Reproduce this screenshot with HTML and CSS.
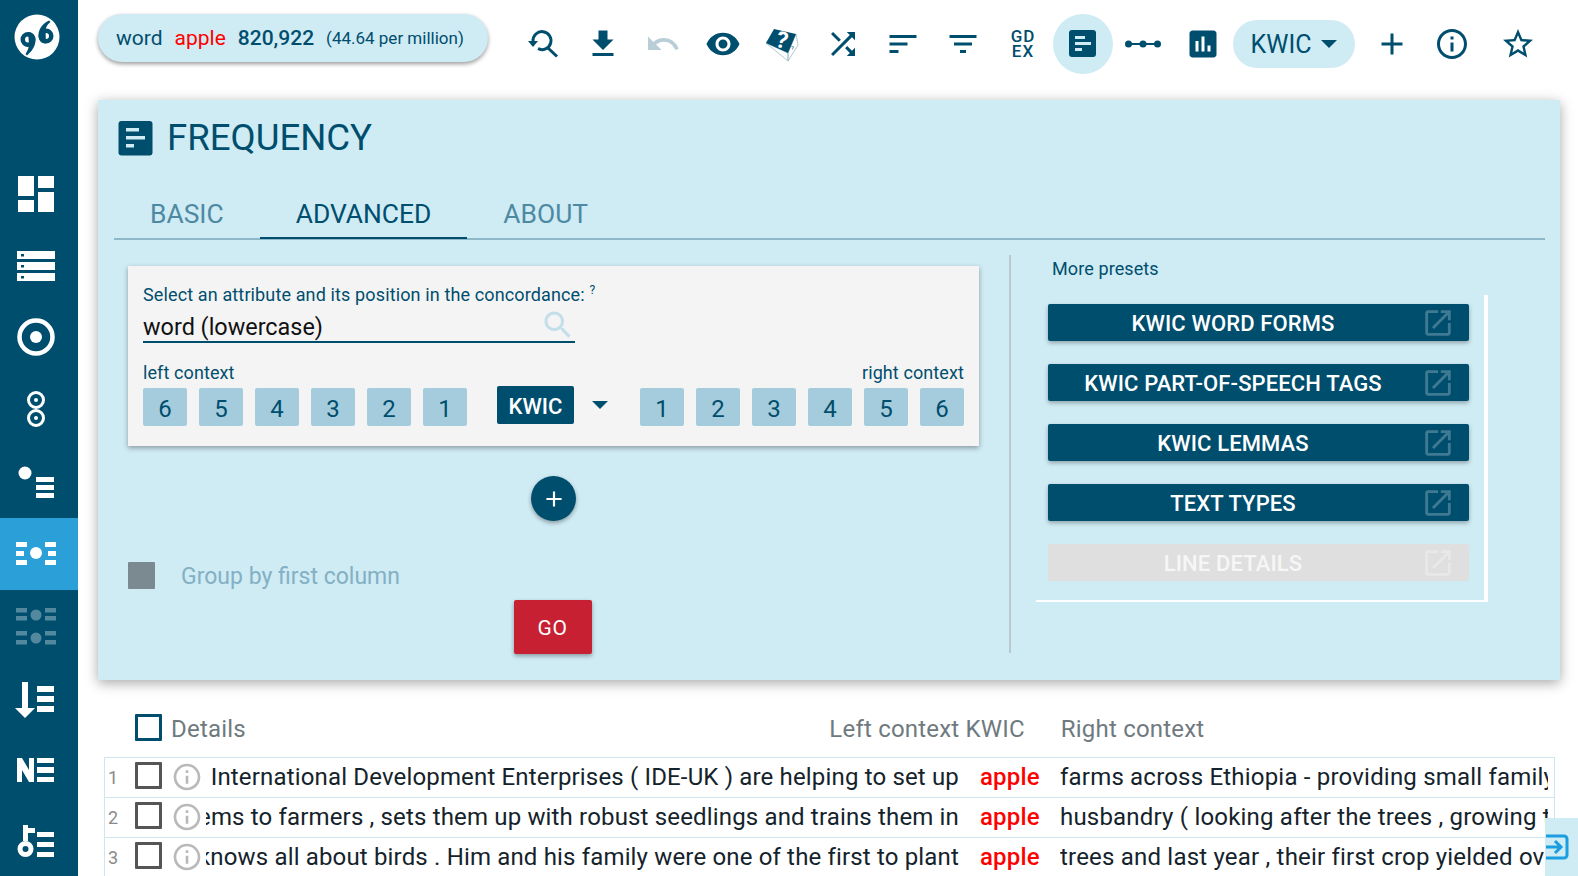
FILE: index.html
```html
<!DOCTYPE html>
<html lang="en">
<head>
<meta charset="utf-8">
<title>Frequency</title>
<link rel="stylesheet" href="styles.css">
</head>
<body>
<nav class="sidebar">
  <div class="logo">
    <svg width="46" height="46" viewBox="0 0 46 46"><circle cx="23" cy="23" r="22.500" fill="#fff"/><g fill="#fff" stroke="#004e6e" stroke-width="4.500"><circle cx="14" cy="25.500" r="5.250"/><circle cx="32" cy="22" r="5.250"/></g><g fill="#004e6e"><path d="M14 18c5 0 7.500 4 7.500 8 0 7-4.500 12-8.500 15.500L11.500 40c2.500-4 3.500-7 3.500-10z"/><path d="M32 29.500c-5 0-7.500-3.500-7.500-8.500 0-7 5.500-12 10.500-14.500L36.500 8c-3.500 3-4.500 5-5 8z"/></g></svg>
  </div>
  <a class="side-item"><svg width="48" height="48" viewBox="0 0 24 24" fill="#fff"><path d="M3 13h8V3H3v10zm0 8h8v-6H3v6zm10 0h8V11h-8v10zm0-18v6h8V3h-8z"/></svg></a>
  <a class="side-item"><svg width="48" height="48" viewBox="0 0 48 48" fill="#fff"><path fill-rule="evenodd" d="M5 9h38v8H5zm4 3v2.500h3V12zM5 20h38v8H5zm4 3v2.500h3V23zM5 31h38v8H5zm4 3v2.500h3V34z"/></svg></a>
  <a class="side-item"><svg width="48" height="48" viewBox="0 0 48 48"><circle cx="24" cy="23" r="16.500" fill="none" stroke="#fff" stroke-width="4.500"/><circle cx="24" cy="23" r="6" fill="#fff"/></svg></a>
  <a class="side-item"><svg width="48" height="48" viewBox="0 0 48 48" fill="none" stroke="#fff" stroke-width="3"><circle cx="24" cy="14" r="7.500"/><circle cx="24" cy="32" r="7.500"/><circle cx="24" cy="14" r="2" fill="#fff" stroke="none"/><circle cx="24" cy="32" r="2" fill="#fff" stroke="none"/></svg></a>
  <a class="side-item"><svg width="48" height="48" viewBox="0 0 48 48" fill="#fff"><circle cx="13" cy="15" r="6.500"/><path d="M24 19h18v5H24zM24 27h18v5H24zM24 35h18v5H24z"/></svg></a>
  <a class="side-item active"><svg width="48" height="48" viewBox="0 0 48 48" fill="#fff"><circle cx="24" cy="23" r="6"/><path d="M4 12h11v5H4zM4 21h8v5H4zM4 30h11v5H4zM33 12h11v5H33zM36 21h8v5h-8zM33 30h11v5H33z"/></svg></a>
  <a class="side-item faded"><svg width="48" height="48" viewBox="0 0 48 48" fill="#fff"><circle cx="24" cy="13" r="5.500"/><circle cx="24" cy="36" r="5.500"/><path d="M4 6h11v4.500H4zM4 14h11v4.500H4zM33 6h11v4.500H33zM33 14h11v4.500H33zM4 29h11v4.500H4zM4 38h11v4.500H4zM33 29h11v4.500H33zM33 38h11v4.500H33z"/></svg></a>
  <a class="side-item"><svg width="48" height="48" viewBox="0 0 48 48" fill="#fff"><path d="M10 8h6v26h7L13 44 3 34h7zM25 12h17v6H25zM25 22h17v6H25zM25 32h17v6H25z"/></svg></a>
  <a class="side-item"><svg width="48" height="48" viewBox="0 0 48 48" fill="#fff"><path d="M5 12h5l7 12V12h5v24h-5L10 24v12H5zM25 12h17v5H25zM25 21h17v6H25zM25 31h17v5H25z"/></svg></a>
  <a class="side-item"><svg width="48" height="48" viewBox="0 0 48 48"><path fill="#fff" d="M11 7h5v3h7v5h-7v8h-5zM25 14h17v5H25zM25 24h17v5H25zM25 34h17v5H25z"/><circle cx="13.500" cy="31" r="5.500" fill="none" stroke="#fff" stroke-width="5"/></svg></a>
</nav>

<div class="main">
  <header class="toolbar">
    <div class="summary">
      <span class="s-word">word</span><span class="s-apple">apple</span><span class="s-count">820,922</span><span class="s-ipm">(44.64 per million)</span>
    </div>
    <div class="tools">
      <span class="tool"><svg width="36" height="36" viewBox="0 0 36 36" fill="none" stroke="#004e6e" stroke-width="3"><path d="M8 15A9 9 0 1 1 13 22.700"/><path d="M23 22l9 8.500"/><path d="M3 15h10l-5 6z" fill="#004e6e" stroke="none"/></svg></span>
      <span class="tool"><svg width="36" height="36" viewBox="0 0 24 24" fill="#004e6e"><path d="M19 9h-4V3H9v6H5l7 7 7-7zM5 18v2h14v-2H5z"/></svg></span>
      <span class="tool dim"><svg width="36" height="36" viewBox="0 0 24 24" fill="#004e6e"><path d="M12.500 8c-2.650 0-5.050.990-6.900 2.600L2 7v9h9l-3.620-3.620c1.390-1.160 3.160-1.880 5.120-1.880 3.540 0 6.550 2.310 7.600 5.500l2.370-.780C21.080 11.030 17.150 8 12.500 8z"/></svg></span>
      <span class="tool"><svg width="36" height="36" viewBox="0 0 24 24" fill="#004e6e"><path d="M12 4.500C7 4.500 2.730 7.610 1 12c1.730 4.390 6 7.500 11 7.500s9.270-3.110 11-7.500c-1.730-4.390-6-7.500-11-7.500zM12 17c-2.760 0-5-2.240-5-5s2.240-5 5-5 5 2.240 5 5-2.240 5-5 5zm0-8c-1.660 0-3 1.340-3 3s1.340 3 3 3 3-1.340 3-3-1.340-3-3-3z"/></svg></span>
      <span class="tool"><svg width="36" height="36" viewBox="0 0 36 36"><path d="M1 17l22 10 0 8zM23 27l8-19 2 11-10 16z" fill="#fff" stroke="#9db9c8" stroke-width=".8"/><path d="M9 3l22 5-8 19-22-10z" fill="#004e6e"/><text class="dice-q" x="17" y="22" transform="rotate(15 17 14)">?</text><text class="dice-r" x="26" y="24">?</text></svg></span>
      <span class="tool"><svg width="36" height="36" viewBox="0 0 24 24" fill="#004e6e"><path d="M10.590 9.170L5.410 4 4 5.410l5.170 5.170 1.420-1.410zM14.500 4l2.040 2.040L4 18.590 5.410 20 17.960 7.460 20 9.500V4h-5.500zm.330 9.410l-1.410 1.410 3.130 3.130L14.500 20H20v-5.500l-2.040 2.040-3.130-3.130z"/></svg></span>
      <span class="tool"><svg width="36" height="36" viewBox="0 0 24 24" fill="#004e6e"><path d="M3 18h6v-2H3v2zM3 6v2h18V6H3zm0 7h12v-2H3v2z"/></svg></span>
      <span class="tool"><svg width="36" height="36" viewBox="0 0 24 24" fill="#004e6e"><path d="M10 18h4v-2h-4v2zM3 6v2h18V6H3zm3 7h12v-2H6v2z"/></svg></span>
      <span class="tool gdex"><span class="gdex-text">GD EX</span></span>
      <span class="tool current"><svg width="36" height="36" viewBox="0 0 36 36"><rect x="4" y="4" width="27" height="27" rx="3" fill="#004e6e"/><path fill="#cfebf4" d="M10 10h10v3H10zM10 16h16v3H10zM10 22h7v3H10z"/></svg></span>
      <span class="tool"><svg width="36" height="36" viewBox="0 0 36 36" fill="#004e6e"><circle cx="3.500" cy="18" r="3.500"/><circle cx="18" cy="18" r="3.500"/><circle cx="32.500" cy="18" r="3.500"/><path d="M4 17h28v2H4z"/></svg></span>
      <span class="tool"><svg width="36" height="36" viewBox="0 0 24 24" fill="#004e6e"><path d="M19 3H5c-1.100 0-2 .9-2 2v14c0 1.100.9 2 2 2h14c1.100 0 2-.9 2-2V5c0-1.100-.9-2-2-2zM9 17H7v-7h2v7zm4 0h-2V7h2v10zm4 0h-2v-4h2v4z"/></svg></span>
    </div>
    <div class="view-pill"><span>KWIC</span><i class="caret"></i></div>
    <span class="tool plus"><svg width="36" height="36" viewBox="0 0 24 24" fill="#004e6e"><path d="M19 13h-6v6h-2v-6H5v-2h6V5h2v6h6v2z"/></svg></span>
    <span class="tool"><svg width="36" height="36" viewBox="0 0 24 24" fill="#004e6e"><path d="M11 7h2v2h-2zm0 4h2v6h-2zm1-9C6.480 2 2 6.480 2 12s4.480 10 10 10 10-4.480 10-10S17.520 2 12 2zm0 18c-4.410 0-8-3.590-8-8s3.590-8 8-8 8 3.590 8 8-3.590 8-8 8z"/></svg></span>
    <span class="tool star"><svg width="36" height="36" viewBox="0 0 24 24" fill="#004e6e"><path d="M22 9.240l-7.190-.620L12 2 9.190 8.630 2 9.240l5.460 4.730L5.820 21 12 17.270 18.180 21l-1.630-7.030L22 9.240zM12 15.400l-3.760 2.270 1-4.280-3.320-2.880 4.380-.380L12 6.100l1.710 4.040 4.380.380-3.320 2.880 1 4.280L12 15.400z"/></svg></span>
  </header>

  <section class="panel">
    <div class="panel-title">
      <svg width="36" height="36" viewBox="0 0 36 36"><rect x=".5" y="1" width="34" height="34.500" rx="3" fill="#004e6e"/><path fill="#cfebf4" d="M8 8h13v3.500H8zM8 16h19v3.500H8zM8 24h8v3.500H8z"/></svg>
      <h1>FREQUENCY</h1>
    </div>
    <div class="tabs">
      <a class="tab">BASIC</a>
      <a class="tab selected">ADVANCED</a>
      <a class="tab">ABOUT</a>
    </div>
    <div class="panel-body">
      <div class="form-col">
        <div class="card">
          <div class="card-label">Select an attribute and its position in the concordance: <sup>?</sup></div>
          <div class="attr-input">
            <span>word (lowercase)</span>
            <svg width="36" height="36" viewBox="0 0 24 24" fill="#c4dfea"><path d="M15.500 14h-.790l-.280-.270C15.410 12.590 16 11.110 16 9.500 16 5.910 13.090 3 9.500 3S3 5.910 3 9.500 5.910 16 9.500 16c1.610 0 3.090-.590 4.230-1.570l.270.280v.790l5 4.990L20.490 19l-4.990-5zm-6 0C7.010 14 5 11.990 5 9.500S7.010 5 9.500 5 14 7.010 14 9.500 11.990 14 9.500 14z"/></svg>
          </div>
          <div class="context-labels"><span>left context</span><span>right context</span></div>
          <div class="positions">
            <div class="pos-group"><span class="pos">6</span><span class="pos">5</span><span class="pos">4</span><span class="pos">3</span><span class="pos">2</span><span class="pos">1</span></div>
            <div class="kwic-group"><span class="kwic-btn">KWIC</span><i class="caret"></i></div>
            <div class="pos-group"><span class="pos">1</span><span class="pos">2</span><span class="pos">3</span><span class="pos">4</span><span class="pos">5</span><span class="pos">6</span></div>
          </div>
        </div>
        <button class="add-btn"><svg width="26" height="26" viewBox="0 0 24 24" fill="#fff"><path d="M19 13h-6v6h-2v-6H5v-2h6V5h2v6h6v2z"/></svg></button>
        <div class="group-row"><span class="group-check"></span><span class="group-text">Group by first column</span></div>
        <button class="go-btn">GO</button>
      </div>
      <div class="presets-col">
        <div class="presets-label">More presets</div>
        <div class="presets">
          <a class="preset"><span>KWIC WORD FORMS</span><svg width="34" height="34" viewBox="0 0 24 24"><path d="M19 19H5V5h7V3H5c-1.110 0-2 .9-2 2v14c0 1.100.890 2 2 2h14c1.100 0 2-.9 2-2v-7h-2v7zM14 3v2h3.590l-9.830 9.830 1.410 1.410L19 6.410V10h2V3h-7z"/></svg></a>
          <a class="preset"><span>KWIC PART-OF-SPEECH TAGS</span><svg width="34" height="34" viewBox="0 0 24 24"><path d="M19 19H5V5h7V3H5c-1.110 0-2 .9-2 2v14c0 1.100.890 2 2 2h14c1.100 0 2-.9 2-2v-7h-2v7zM14 3v2h3.590l-9.830 9.830 1.410 1.410L19 6.410V10h2V3h-7z"/></svg></a>
          <a class="preset"><span>KWIC LEMMAS</span><svg width="34" height="34" viewBox="0 0 24 24"><path d="M19 19H5V5h7V3H5c-1.110 0-2 .9-2 2v14c0 1.100.890 2 2 2h14c1.100 0 2-.9 2-2v-7h-2v7zM14 3v2h3.590l-9.830 9.830 1.410 1.410L19 6.410V10h2V3h-7z"/></svg></a>
          <a class="preset"><span>TEXT TYPES</span><svg width="34" height="34" viewBox="0 0 24 24"><path d="M19 19H5V5h7V3H5c-1.110 0-2 .9-2 2v14c0 1.100.890 2 2 2h14c1.100 0 2-.9 2-2v-7h-2v7zM14 3v2h3.590l-9.830 9.830 1.410 1.410L19 6.410V10h2V3h-7z"/></svg></a>
          <a class="preset disabled"><span>LINE DETAILS</span><svg width="34" height="34" viewBox="0 0 24 24"><path d="M19 19H5V5h7V3H5c-1.110 0-2 .9-2 2v14c0 1.100.890 2 2 2h14c1.100 0 2-.9 2-2v-7h-2v7zM14 3v2h3.590l-9.830 9.830 1.410 1.410L19 6.410V10h2V3h-7z"/></svg></a>
        </div>
      </div>
    </div>
  </section>

  <section class="results">
    <div class="results-head">
      <span class="check head-check"></span>
      <span class="head-details">Details</span>
      <span class="head-left">Left context KWIC</span>
      <span class="head-right">Right context</span>
    </div>
    <div class="rows">
      <div class="row">
        <span class="num">1</span><span class="check"></span>
        <svg class="info" width="32" height="32" viewBox="0 0 24 24" fill="#b9b9b9"><path d="M11 7h2v2h-2zm0 4h2v6h-2zm1-9C6.480 2 2 6.480 2 12s4.480 10 10 10 10-4.480 10-10S17.520 2 12 2zm0 18c-4.410 0-8-3.590-8-8s3.590-8 8-8 8 3.590 8 8-3.590 8-8 8z"/></svg>
        <div class="left"><span>International Development Enterprises ( IDE-UK ) are helping to set up</span></div>
        <span class="hit">apple</span>
        <div class="right">farms across Ethiopia - providing small family</div>
      </div>
      <div class="row">
        <span class="num">2</span><span class="check"></span>
        <svg class="info" width="32" height="32" viewBox="0 0 24 24" fill="#b9b9b9"><path d="M11 7h2v2h-2zm0 4h2v6h-2zm1-9C6.480 2 2 6.480 2 12s4.480 10 10 10 10-4.480 10-10S17.520 2 12 2zm0 18c-4.410 0-8-3.590-8-8s3.590-8 8-8 8 3.590 8 8-3.590 8-8 8z"/></svg>
        <div class="left"><span>systems to farmers , sets them up with robust seedlings and trains them in</span></div>
        <span class="hit">apple</span>
        <div class="right">husbandry ( looking after the trees , growing them</div>
      </div>
      <div class="row">
        <span class="num">3</span><span class="check"></span>
        <svg class="info" width="32" height="32" viewBox="0 0 24 24" fill="#b9b9b9"><path d="M11 7h2v2h-2zm0 4h2v6h-2zm1-9C6.480 2 2 6.480 2 12s4.480 10 10 10 10-4.480 10-10S17.520 2 12 2zm0 18c-4.410 0-8-3.590-8-8s3.590-8 8-8 8 3.590 8 8-3.590 8-8 8z"/></svg>
        <div class="left"><span>knows all about birds . Him and his family were one of the first to plant</span></div>
        <span class="hit">apple</span>
        <div class="right">trees and last year , their first crop yielded over</div>
      </div>
    </div>
  </section>
  <aside class="side-toggle"><svg width="28" height="30" viewBox="0 0 28 30" fill="none" stroke="#1a9ee0" stroke-width="3"><path d="M1 4h18a3 3 0 0 1 3 3v16a3 3 0 0 1-3 3H1"/><path d="M1 15h14M10 9l6 6-6 6"/></svg></aside>
</div>
</body>
</html>
```
FILE: styles.css
```css
* { box-sizing: border-box; }
html, body { margin: 0; height: 100%; overflow: hidden; }
body {
  display: flex;
  background: #fff;
  font-family: Roboto, "Liberation Sans", sans-serif;
  color: #004e6e;
}
.sidebar {
  width: 78px;
  flex: none;
  height: 100%;
  background: #004e6e;
  display: flex;
  flex-direction: column;
  overflow: hidden;
}
.logo { height: 158px; flex: none; padding: 14px 0 0 14px; }
.side-item {
  height: 72px;
  flex: none;
  display: flex;
  align-items: center;
  justify-content: center;
}
.side-item svg { margin-left: -6px; }
.side-item.active { background: #2a9fd8; }
.side-item.faded svg { opacity: .33; }
.main { flex: 1; min-width: 0; position: relative; }

.toolbar {
  height: 100px;
  display: flex;
  align-items: center;
  padding: 0 0 12px 20px;
}
.summary {
  width: 390px;
  height: 48px;
  margin: -12px 25px 0 0;
  flex: none;
  border-radius: 24px;
  background: #cfebf4;
  box-shadow: 0 2px 4px rgba(0,0,0,.4);
  display: flex;
  align-items: center;
  padding-left: 18px;
  white-space: nowrap;
}
.s-word { font-size: 21px; margin-right: 12px; }
.s-apple { font-size: 21px; color: #f00; margin-right: 12px; }
.s-count { font-size: 21px; font-weight: 500; margin-right: 12px; }
.s-ipm { font-size: 17px; }
.tools { display: flex; align-items: center; }
.tool {
  width: 60px;
  height: 60px;
  flex: none;
  display: flex;
  align-items: center;
  justify-content: center;
}
.tool.dim svg { opacity: .27; }
.tool.current { background: #cfebf4; border-radius: 50%; }
.gdex-text {
  width: 30px;
  font-size: 17px;
  font-weight: 500;
  line-height: 15px;
  letter-spacing: 1px;
  text-align: center;
}
.dice-q { font: 700 23px Roboto, sans-serif; fill: #fff; text-anchor: middle; }
.dice-r { font: 400 6px Roboto, sans-serif; fill: #004e6e; }
.view-pill {
  width: 122px;
  height: 48px;
  margin-right: 7px;
  flex: none;
  border-radius: 24px;
  background: #cfebf4;
  display: flex;
  align-items: center;
  justify-content: center;
  gap: 10px;
  font-size: 25px;
}
.caret {
  display: block;
  width: 0;
  height: 0;
  border-left: 8px solid transparent;
  border-right: 8px solid transparent;
  border-top: 8px solid #004e6e;
}
.tool.star { margin-left: 6px; }

.panel {
  width: 1462px;
  height: 580px;
  margin-left: 20px;
  background: #cfebf4;
  box-shadow: 0 3px 12px rgba(0,0,0,.35);
  padding-top: 20px;
}
.panel-title {
  height: 36px;
  padding-left: 20px;
  display: flex;
  align-items: center;
  gap: 13px;
}
.panel-title h1 { margin: 0; font-size: 36.6px; font-weight: 400; line-height: 40px; }
.tabs {
  margin: 34px 15px 0 16px;
  height: 50px;
  border-bottom: 2px solid #8db8c9;
  display: flex;
}
.tab {
  height: 49px;
  padding: 0 36px;
  font-size: 26.4px;
  line-height: 48px;
  color: #4d89a3;
}
.tab.selected { color: #004e6e; border-bottom: 2px solid #004e6e; }
.panel-body {
  display: flex;
  margin: 15px 0 0 15px;
  height: 398px;
}
.form-col {
  width: 898px;
  flex: none;
  padding: 11px 30px 0 15px;
  border-right: 2px solid #b9c9cf;
  display: flex;
  flex-direction: column;
  align-items: center;
}
.card {
  width: 851px;
  height: 180px;
  flex: none;
  background: #f4f4f4;
  box-shadow: 0 2px 5px rgba(0,0,0,.35);
  padding: 19px 15px 0;
}
.card-label { font-size: 18px; line-height: 20px; color: #004e6e; white-space: nowrap; letter-spacing: .13px; }
.card-label sup { font-size: 12px; line-height: 0; }
.attr-input {
  width: 432px;
  height: 36px;
  border-bottom: 2px solid #004e6e;
  display: flex;
  align-items: flex-end;
  justify-content: space-between;
  font-size: 23.4px;
  line-height: 27px;
  color: #111;
  margin-top: 2px;
}
.attr-input svg { margin: 0 -1px 0 0; align-self: flex-start; }
.context-labels {
  display: flex;
  justify-content: space-between;
  font-size: 18px;
  line-height: 20px;
  margin-top: 20px;
  letter-spacing: .1px;
}
.positions {
  display: flex;
  justify-content: space-between;
  margin-top: 3px;
}
.pos-group { display: flex; gap: 12px; margin-top: 2px; }
.pos {
  width: 44px;
  height: 38px;
  background: #a5ccdc;
  border-radius: 2px;
  font-size: 24px;
  line-height: 43px;
  text-align: center;
}
.kwic-group { display: flex; gap: 18px; align-items: flex-start; }
.kwic-btn {
  width: 77px;
  height: 38px;
  background: #004e6e;
  color: #fff;
  border-radius: 2px;
  font-size: 22px;
  font-weight: 500;
  line-height: 41px;
  text-align: center;
}
.kwic-group .caret { margin-top: 15px; margin-right: 2px; }
.add-btn {
  width: 45px;
  height: 45px;
  flex: none;
  margin-top: 30px;
  border: 0;
  padding: 0;
  border-radius: 50%;
  background: #004e6e;
  box-shadow: 0 2px 4px rgba(0,0,0,.35);
  display: flex;
  align-items: center;
  justify-content: center;
}
.group-row {
  align-self: flex-start;
  height: 27px;
  margin: 41px 0 0;
  display: flex;
  align-items: center;
  gap: 26px;
  font-size: 23px;
  color: #83b0c4;
}
.group-text { padding-top: 2px; }
.group-check { width: 27px; height: 27px; background: #7a8a90; border-radius: 1px; }
.go-btn {
  width: 78px;
  height: 54px;
  flex: none;
  margin: 11px 2px 0 0;
  border: 0;
  padding: 2px 0 0;
  border-radius: 2px;
  background: #c72032;
  color: #fff;
  font: 400 21px Roboto, sans-serif;
  letter-spacing: .5px;
  box-shadow: 0 2px 4px rgba(0,0,0,.35);
}
.presets-col { padding: 4px 0 0 25px; }
.presets-label { margin-left: 16px; font-size: 18px; line-height: 20px; height: 36px; letter-spacing: .1px; }
.presets {
  width: 452px;
  height: 307px;
  border-right: 4px solid #fff;
  border-bottom: 2px solid #fff;
  padding: 9px 15px 0 12px;
  display: flex;
  flex-direction: column;
  gap: 23px;
}
.preset {
  height: 37px;
  flex: none;
  background: #004e6e;
  color: #fff;
  border-radius: 2px;
  box-shadow: 0 2px 4px rgba(0,0,0,.3);
  display: flex;
  align-items: center;
  padding: 2px 14px 0 12px;
  font-size: 22px;
  font-weight: 500;
  letter-spacing: .12px;
}
.preset span { flex: 1; text-align: center; margin-right: 15px; white-space: nowrap; }
.preset svg { fill: #fff; opacity: .25; flex: none; margin-top: -2px; }
.preset.disabled { background: #dfdfdf; box-shadow: none; color: #f6f6f6; }
.preset.disabled svg { opacity: .3; }

.results { margin-left: 26px; width: 1451px; }
.results-head {
  height: 77px;
  padding: 34px 0 0 31px;
  display: flex;
  align-items: flex-start;
  font-size: 24px;
  letter-spacing: .2px;
  color: #6f7a80;
  position: relative;
}
.check {
  width: 27px;
  height: 27px;
  flex: none;
  border: 3px solid #555;
  border-radius: 1px;
  background: #fff;
}
.row .check { margin-bottom: 3px; }
.head-check { border-color: #004e6e; }
.head-details { margin-left: 9px; line-height: 30px; }
.head-left { width: 779px; text-align: right; line-height: 30px; }
.head-right { margin-left: 36px; line-height: 30px; }
.rows { border: 1px solid #cfe6ef; border-bottom: 0; }
.row {
  height: 40px;
  display: flex;
  align-items: center;
  padding-bottom: 1px;
  border-bottom: 1px solid #cfe6ef;
  font-size: 24px;
  letter-spacing: .16px;
  color: #14232b;
  white-space: nowrap;
}
.num { width: 30px; flex: none; font-size: 18px; color: #8a8a8a; padding-left: 3px; }
.info { flex: none; margin-left: 9px; }
.left {
  width: 753px;
  flex: none;
  margin-left: 3px;
  display: flex;
  justify-content: flex-end;
  overflow: hidden;
}
.left span { flex: none; }
.hit { width: 101px; flex: none; padding-left: 21px; color: #f00; font-weight: 500; }
.right { width: 488px; flex: none; overflow: hidden; letter-spacing: .2px; }
.side-toggle {
  position: absolute;
  right: 0;
  bottom: 0;
  width: 33px;
  height: 58px;
  background: #cfebf4;
  padding-top: 14px;
}
```
